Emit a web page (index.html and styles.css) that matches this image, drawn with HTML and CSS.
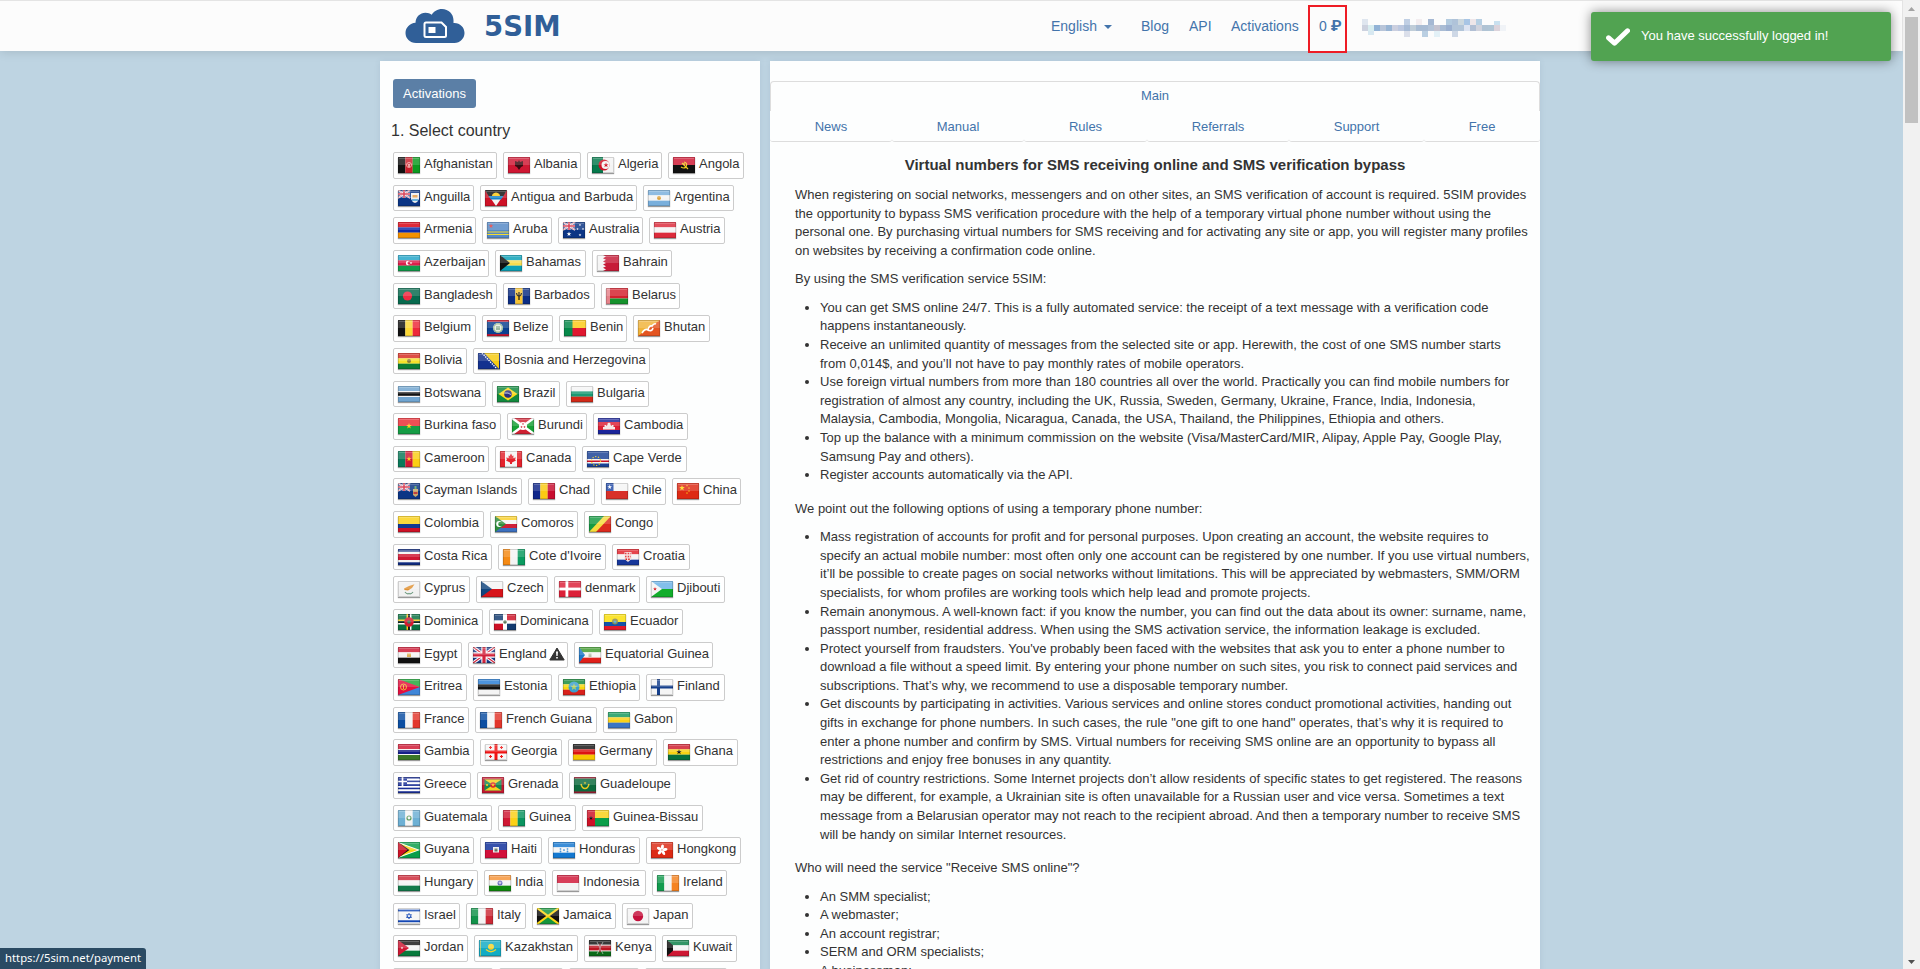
FILE: index.html
```html
<!DOCTYPE html>
<html lang="en">
<head>
<meta charset="utf-8">
<title>5SIM</title>
<link rel="stylesheet" href="styles.css">
</head>
<body>
<header class="topbar">
  <div class="brand">
    <svg class="brand-cloud" viewBox="0 0 60 35" width="60" height="35">
      <path fill="#305f98" d="M11 35C5 35 .5 30.500.5 25C.5 19.500 5 15.200 10.500 14.800C10.700 9 15 4.800 20.500 4.800C23 4.800 25.200 5.500 26.800 6.800C28.500 3.500 32.500 1 37 1C43.500 1 48.500 6 48.500 12.200L48.500 15C54.500 14.500 59.500 19 59.500 25C59.500 30.500 55 35 49.500 35Z"/>
      <path fill="none" stroke="#fff" stroke-width="2" d="M21 14.500H36.500L41 19V27.500Q41 29 39.500 29H21Q19.500 29 19.500 27.500V16Q19.500 14.500 21 14.500Z"/>
      <path fill="#fff" d="M23.500 19H30.500V25H23.500Z"/>
    </svg>
    <span class="brand-name">5SIM</span>
  </div>
  <nav class="menu">
    <a class="menu-lang">English <i class="caret"></i></a>
    <a class="menu-blog">Blog</a>
    <a class="menu-api">API</a>
    <a class="menu-act">Activations</a>
    <a class="menu-balance">0 <b>₽</b></a>
    <svg class="account" id="account" viewBox="0 0 24 3" width="144" height="18" preserveAspectRatio="none" shape-rendering="crispEdges"></svg>
  </nav>
</header>

<main class="page">
  <section class="panel countries">
    <button class="primary">Activations</button>
    <h2 class="step">1. Select country</h2>
    <div class="rows" id="rows"></div>
  </section>

  <section class="panel content">
    <nav class="tabs">
      <a class="tab-main">Main</a>
      <a>News</a><a>Manual</a><a>Rules</a><a>Referrals</a><a>Support</a><a>Free</a>
    </nav>
    <article class="article">
      <h1>Virtual numbers for SMS receiving online and SMS verification bypass</h1>
      <p>When registering on social networks, messengers and on other sites, an SMS verification of account is required. 5SIM provides the opportunity to bypass SMS verification procedure with the help of a temporary virtual phone number without using the personal one. By purchasing virtual numbers for SMS receiving and for activating any site or app, you will register many profiles on websites by receiving a confirmation code online.</p>
      <p>By using the SMS verification service 5SIM:</p>
      <ul>
        <li>You can get SMS online 24/7. This is a fully automated service: the receipt of a text message with a verification code happens instantaneously.</li>
        <li>Receive an unlimited quantity of messages from the selected site or app. Herewith, the cost of one SMS number starts<br>from 0,014$, and you’ll not have to pay monthly rates of mobile operators.</li>
        <li>Use foreign virtual numbers from more than 180 countries all over the world. Practically you can find mobile numbers for registration of almost any country, including the UK, Russia, Sweden, Germany, Ukraine, France, India, Indonesia, Malaysia, Cambodia, Mongolia, Nicaragua, Canada, the USA, Thailand, the Philippines, Ethiopia and others.</li>
        <li>Top up the balance with a minimum commission on the website (Visa/MasterCard/MIR, Alipay, Apple Pay, Google Play, Samsung Pay and others).</li>
        <li>Register accounts automatically via the API.</li>
      </ul>
      <p>We point out the following options of using a temporary phone number:</p>
      <ul>
        <li>Mass registration of accounts for profit and for personal purposes. Upon creating an account, the website requires to specify an actual mobile number: most often only one account can be registered by one number. If you use virtual numbers, it’ll be possible to create pages on social networks without limitations. This will be appreciated by webmasters, SMM/ORM specialists, for whom profiles are working tools which help lead and promote projects.</li>
        <li>Remain anonymous. A well-known fact: if you know the number, you can find out the data about its owner: surname, name, passport number, residential address. When using the SMS activation service, the information leakage is excluded.</li>
        <li>Protect yourself from fraudsters. You've probably been faced with the websites that ask you to enter a phone number to download a file without a speed limit. By entering your phone number on such sites, you risk to connect paid services and subscriptions. That’s why, we recommend to use a disposable temporary number.</li>
        <li>Get discounts by participating in activities. Various services and online stores conduct promotional activities, handing out gifts in exchange for phone numbers. In such cases, the rule "one gift to one hand" operates, that’s why it is required to enter a phone number and confirm by SMS. Virtual numbers for receiving SMS online are an opportunity to bypass all restrictions and enjoy free bonuses in any quantity.</li>
        <li>Get rid of country restrictions. Some Internet projects don’t allow residents of specific states to get registered. The reasons may be different, for example, a Ukrainian site is often unavailable for a Russian user and vice versa. Sometimes a text message from a Belarusian operator may not reach to the recipient abroad. And then a temporary number to receive SMS will be handy on similar Internet resources.</li>
      </ul>
      <p>Who will need the service "Receive SMS online"?</p>
      <ul>
        <li>An SMM specialist;</li>
        <li>A webmaster;</li>
        <li>An account registrar;</li>
        <li>SERM and ORM specialists;</li>
        <li>A businessman;</li>
      </ul>
    </article>
  </section>
</main>

<div class="highlight"></div>
<div class="toast">
  <svg viewBox="0 0 24 18" width="24" height="18"><path fill="none" stroke="#fff" stroke-width="5" stroke-linecap="round" stroke-linejoin="round" d="M2.600 9.800L8.500 15.200L21.500 2.800"/></svg>
  <span>You have successfully logged in!</span>
</div>
<div class="scrollbar">
  <svg viewBox="0 0 7 4" width="7" height="4"><path fill="#a3a3a3" d="M3.500 0L7 4H0Z"/></svg>
  <div class="thumb"></div>
  <svg class="down" viewBox="0 0 7 4" width="7" height="4"><path fill="#505050" d="M3.500 4L7 0H0Z"/></svg>
</div>
<div class="status">https://5sim.net/payment</div>
<script src="script.js"></script>
</body>
</html>
```
FILE: styles.css
```css
* { box-sizing: border-box; }
body {
  margin: 0;
  height: 969px;
  overflow: hidden;
  position: relative;
  background: #bed4e2;
  color: #333;
  font: 13px/18.571px "Liberation Sans", Arial, sans-serif;
}
a { color: #4374ab; text-decoration: none; }

.topbar {
  display: flex;
  height: 51px;
  width: 1903px;
  padding-left: 405px;
  background: #fcfcfc;
  border-top: 1px solid #e4e4e4;
  border-right: 1px solid #e4e4e4;
  box-shadow: 0 1px 10px rgba(0, 0, 0, .13);
}
.brand { display: flex; width: 646px; padding-top: 7px; }
.brand-name {
  margin: 2px 0 0 19px;
  color: #305f98;
  font: bold 27.5px/32px "DejaVu Sans", sans-serif;
}
.menu { display: flex; padding-top: 15px; font-size: 14px; line-height: 20px; }
.menu-lang { width: 90px; }
.menu-blog { width: 48px; }
.menu-api { width: 42px; }
.menu-act { width: 88px; }
.menu-balance { width: 43px; white-space: nowrap; }
.menu-balance b { font-family: Roboto, "Open Sans", sans-serif; font-size: 15.5px; line-height: 1; }
.caret {
  display: inline-block;
  margin-left: 3px;
  vertical-align: 2px;
  border: 4px solid transparent;
  border-top-color: #4374ab;
  border-bottom: 0;
}
.account { margin-top: 3px; }

.page { display: flex; gap: 10px; padding: 10px 0 0 380px; }
.panel { height: 920px; background: #fdfefe; box-shadow: 0 0 6px rgba(60, 90, 120, .1); }
.countries { width: 380px; padding: 18px 0 0 13px; }
.primary {
  display: block;
  width: 83px;
  height: 29px;
  padding: 0;
  border: 0;
  border-radius: 3px;
  background: #5b7fa6;
  color: #fff;
  font: 13px/29px "Liberation Sans", Arial, sans-serif;
}
.step { margin: 12px 0 11px -2px; font-size: 16px; line-height: 21px; font-weight: 400; }
.rows { display: flex; flex-direction: column; gap: 6.050px; padding-top: .150px; }
.row { display: flex; gap: 6px; height: 26.580px; }
.chip {
  display: flex;
  flex: none;
  height: 100%;
  padding: 2px 0 0 4px;
  border: 1px solid #ccc;
  border-radius: 2px;
  background: #fff;
  white-space: nowrap;
}
.flag { flex: none; width: 22px; height: 16px; margin: 2px 4px 0 0; box-shadow: 0 1px 1px rgba(0, 0, 0, .4); }
.warn { flex: none; width: 16px; height: 14px; margin: 2px 0 0 2px; }

.content { width: 770px; padding-top: 20px; }
.tabs { display: grid; grid-template-columns: 122px 132px 123px 142px 135px 116px; text-align: center; }
.tabs a { height: 31px; line-height: 32px; border-bottom: 1px solid #ddd; border-radius: 3px; }
.tabs .tab-main {
  grid-column: 1 / -1;
  height: 30px;
  line-height: 27px;
  border: 1px solid #ddd;
  border-bottom: 0;
  border-radius: 4px 4px 0 0;
}
.article { padding: 13px 9px 0 25px; }
.article h1 { margin: 0 16px 12px 0; font-size: 15px; line-height: 19px; text-align: center; }
.article p { margin: 0 0 10px; }
.article ul { margin: 0 0 15px; padding-left: 25px; }

.highlight { position: absolute; left: 1308px; top: 5px; width: 39px; height: 48px; border: 2px solid #ee1c25; }
.toast {
  position: absolute;
  left: 1591px;
  top: 12px;
  display: flex;
  align-items: center;
  gap: 11px;
  width: 300px;
  height: 49px;
  padding-left: 15px;
  border-radius: 3px;
  background: #51a351;
  box-shadow: 0 0 12px rgba(0, 0, 0, .45);
  color: #fff;
}
.scrollbar {
  position: absolute;
  top: 0;
  right: 0;
  display: flex;
  flex-direction: column;
  align-items: center;
  width: 17px;
  height: 969px;
  padding: 7px 0 5px;
  background: #f1f1f1;
}
.thumb { width: 13px; height: 106px; margin-top: 6px; background: #c1c1c1; }
.down { margin-top: auto; }
.status {
  position: absolute;
  left: 0;
  bottom: 0;
  width: 146px;
  height: 21px;
  padding-left: 5px;
  border-radius: 0 3px 0 0;
  background: #2a4a63;
  color: #fff;
  font: 11.3px/20px "Noto Sans", "Open Sans", sans-serif;
}
```
FILE: script.js
```js
// Flag drawing helpers; every flag is 22 by 16.
const R = (x, y, w, h, f) => `<rect x="${x}" y="${y}" width="${w}" height="${h}" fill="${f}"/>`;
const H = (...c) => c.map((f, i) => R(0, i * 16 / c.length, 22, 16 / c.length + .1, f)).join('');
const V = (...c) => c.map((f, i) => R(i * 22 / c.length, 0, 22 / c.length + .1, 16, f)).join('');
const C = (x, y, r, f) => `<circle cx="${x}" cy="${y}" r="${r}" fill="${f}"/>`;
const O = (x, y, r, s, w = 1) => `<circle cx="${x}" cy="${y}" r="${r}" fill="none" stroke="${s}" stroke-width="${w}"/>`;
const P = (d, f) => `<path d="${d}" fill="${f}"/>`;
const L = (d, s, w = 1) => `<path d="${d}" fill="none" stroke="${s}" stroke-width="${w}"/>`;
const S = (x, y, r, f) => {
  let d = '';
  for (let i = 0; i < 10; i++) {
    const a = -Math.PI / 2 + i * Math.PI / 5, q = i % 2 ? r * .4 : r;
    d += (i ? 'L' : 'M') + (x + q * Math.cos(a)).toFixed(2) + ' ' + (y + q * Math.sin(a)).toFixed(2);
  }
  return P(d + 'Z', f);
};
const moon = (x, y, r, f, bg, o = 1.2) => C(x, y, r, f) + C(x + o, y, r * .78, bg);
const jack = (w, h) => R(0, 0, w, h, '#1c3a86') +
  L(`M0 0L${w} ${h}M${w} 0L0 ${h}`, '#fff', h / 5) + L(`M0 0L${w} ${h}M${w} 0L0 ${h}`, '#d2233c', h / 14) +
  L(`M${w / 2} 0V${h}M0 ${h / 2}H${w}`, '#fff', h / 3) + L(`M${w / 2} 0V${h}M0 ${h / 2}H${w}`, '#d2233c', h / 5);
const ensign = R(0, 0, 22, 16, '#0b3585') + jack(12, 8);
const tri = (f, x = 10) => P(`M0 0L${x} 8L0 16Z`, f);
const red = '#ce1126', gold = '#fccb16', white = '#f4f4f4', black = '#111';

const flags = {
  'Afghanistan': V(black, '#c8202c', '#0c9a20') + O(11, 8, 2.500, '#eea0a0') + R(10, 7, 2, 3, '#e8a0a0'),
  'Albania': R(0, 0, 22, 16, '#cf1733') + P('M7 4L10 5L11 3L12 5L15 4V9L13 10L11 13L9 10L7 9Z', '#3a0a10'),
  'Algeria': V('#067a4c', white) + C(12, 8, 5.500, red) + C(13.500, 8, 4, white) + S(14, 8, 2.700, red),
  'Angola': H('#cf1733', black) + L('M11 5Q15 6 13 10Q11 12 8 10M9 6L15 12', '#f0cc20', 1.200) + S(11, 7, 1.600, '#f0cc20'),
  'Anguilla': ensign + P('M13 3H21V9Q20 12 17 13Q14 12 13 9Z', '#eee') + R(14.500, 5, 5, 2.500, '#e69a40') + R(14, 9, 6, 2, '#6ab4dd'),
  'Antigua and Barbuda': R(0, 0, 22, 16, red) + P('M0 0H22L11 16Z', white) + P('M0 0H22L18.500 6H3.500Z', black) + P('M3.500 6H18.500L16 9.500H6Z', '#1784c7') + P('M7 6Q7 3 11 2.500Q15 3 15 6Z', gold),
  'Argentina': H('#79afdc', white, '#79afdc') + C(11, 8, 2, '#dca340'),
  'Armenia': H('#d90012', '#0c2cab', '#f29100'),
  'Aruba': R(0, 0, 22, 16, '#5589c6') + R(0, 9.500, 22, 1, '#f2dc30') + R(0, 12, 22, 1, '#f2dc30') + S(4, 4, 2.500, '#e33b3b'),
  'Australia': ensign + S(6, 12, 2.500, '#fff') + S(17, 3, 1.300, '#fff') + S(20, 7, 1.200, '#fff') + S(14.500, 7, 1.200, '#fff') + S(17, 13, 1.500, '#fff'),
  'Austria': H('#dc2b3b', white, '#dc2b3b'),
  'Azerbaijan': H('#22a5c9', '#dc1f4b', '#109b4b') + moon(10, 8, 2.200, '#fff', '#dc1f4b') + S(13, 8, 1.400, '#fff'),
  'Bahamas': H('#0ba1b7', '#f6dc4f', '#0ba1b7') + tri(black),
  'Bahrain': R(0, 0, 22, 16, '#c71c38') + P('M0 0H6L9 1.600L6 3.200L9 4.800L6 6.400L9 8L6 9.600L9 11.200L6 12.800L9 14.400L6 16H0Z', white),
  'Bangladesh': R(0, 0, 22, 16, '#076a4e') + C(9.500, 8, 4.600, '#ef2b42'),
  'Barbados': V('#0b2d84', '#f7c332', '#0b2d84') + L('M8.500 5Q9 8 11 8Q13 8 13.500 5M11 4V12', black, 1.200),
  'Belarus': R(0, 0, 22, 10.500, '#d4202d') + R(0, 10.500, 22, 5.500, '#15922c') + R(0, 0, 4, 16, '#f2c6c8') + L('M1 0V16M3 0V16', '#d4202d', .8),
  'Belgium': V(black, '#fbd735', '#ed2939'),
  'Belize': R(0, 0, 22, 16, '#0b4190') + R(0, 0, 22, 1.800, red) + R(0, 14.200, 22, 1.800, red) + C(11, 8, 5, '#e8eee4') + O(11, 8, 4.200, '#6a9a55', .8) + R(9, 6, 4, 4, '#9ab9a0'),
  'Benin': R(0, 0, 22, 8, gold) + R(0, 8, 22, 8, '#e01830') + R(0, 0, 8.500, 16, '#06894a'),
  'Bhutan': R(0, 0, 22, 16, '#e45521') + P('M0 0H22L0 16Z', '#f1b43a') + L('M4 13Q7 8 10 10Q11 5 14 6Q16 3 18 4M10 10Q14 12 15 8', '#fff', 1.600),
  'Bolivia': H('#d62b20', '#f6e12a', '#0b7d34') + C(11, 8, 2, '#8b7a3a'),
  'Bosnia and Herzegovina': R(0, 0, 22, 16, '#13318f') + P('M6 0H21V16Z', '#f6cb12') + '<path d="M4 0L19 16" stroke="#fff" stroke-width="1.300" stroke-dasharray="1.400 1" fill="none"/>',
  'Botswana': R(0, 0, 22, 16, '#70a5d1') + R(0, 5, 22, 6, white) + R(0, 6.200, 22, 3.600, black),
  'Brazil': R(0, 0, 22, 16, '#128a3e') + P('M11 1.500L20.500 8L11 14.500L1.500 8Z', '#fbd91c') + C(11, 8, 3.800, '#2c2f7e') + L('M7.500 7Q11 6 14.500 9', '#c8d4e8', .8),
  'Bulgaria': H(white, '#1a9a73', '#d22a18'),
  'Burkina faso': H('#ea2b33', '#159c45') + S(11, 8, 3, gold),
  'Burundi': R(0, 0, 22, 16, '#17a135') + P('M0 0H22L0 16H22Z', '#cf2032') + L('M0 0L22 16M22 0L0 16', '#fff', 2.500) + C(11, 8, 4, '#fff') + S(11, 6, 1.200, red) + S(9.500, 9, 1.200, red) + S(12.500, 9, 1.200, red),
  'Cambodia': R(0, 0, 22, 16, '#1a249a') + R(0, 4, 22, 8, '#dc1f35') + P('M5 11.500V9H6.500V7H8V8L9.500 7V5.500L11 4.500L12.500 5.500V7L14 8V7H15.500V9H17V11.500Z', '#f4e8e8'),
  'Cameroon': V('#0a7a5a', '#cf1733', '#fbcf15') + S(11, 8, 2.700, gold),
  'Canada': R(0, 0, 22, 16, '#f4f4f4') + R(0, 0, 5, 16, '#e4222c') + R(17, 0, 5, 16, '#e4222c') + P('M11 2.500L12.300 5L13.500 4.500L13.300 7L16 6.500L15 8.500L16 9.500L12 11.500V13H10V11.500L6 9.500L7 8.500L6 6.500L8.700 7L8.500 4.500L9.700 5Z', '#e4222c'),
  'Cape Verde': R(0, 0, 22, 16, '#1a4296') + R(0, 8, 22, 4.500, white) + R(0, 9.500, 22, 1.500, red) + '<circle cx="9" cy="10" r="4.500" fill="none" stroke="#f7d116" stroke-width="1.200" stroke-dasharray="1.200 1.630"/>',
  'Cayman Islands': ensign + P('M15 6H20V12L17.500 14L15 12Z', '#c8a86c') + R(16.500, 3, 2, 3, '#58a05c') + R(15.500, 9, 4, 2, '#c04040'),
  'Chad': V('#10268a', '#fbcb12', '#c80d2f'),
  'Chile': H(white, '#d8312a') + R(0, 0, 7.500, 8, '#1f48a5') + S(3.700, 4, 2.500, '#fff'),
  'China': R(0, 0, 22, 16, '#de2a14') + S(5, 5, 3, '#ffd916') + S(10, 2.500, 1.100, '#ffd916') + S(12, 5, 1.100, '#ffd916') + S(12, 8, 1.100, '#ffd916') + S(10, 10, 1.100, '#ffd916'),
  'Colombia': R(0, 0, 22, 8, '#fbd116') + R(0, 8, 22, 4, '#123a93') + R(0, 12, 22, 4, '#ce1126'),
  'Comoros': H('#fbd02a', white, '#cf2038', '#3c70bf') + tri('#2f8d3b', 11) + moon(4.200, 8, 3, '#fff', '#2f8d3b', 1.300),
  'Congo': R(0, 0, 22, 16, '#f6dc3d') + P('M0 0H15L0 16Z', '#159a43') + P('M22 0V16H7Z', '#dc2a1e'),
  'Costa Rica': R(0, 0, 22, 16, '#0f2b7f') + R(0, 2.700, 22, 10.600, white) + R(0, 5, 22, 6, '#cf1733'),
  "Cote d'Ivoire": V('#f58a14', white, '#0a9b60'),
  'Croatia': H('#e0202a', white, '#17379a') + P('M7.500 3H14.500V10L11 13L7.500 10Z', '#f2dcdc') + '<path d="M8 4.500H14M8 7.500H14M8.500 10.300H13.500" stroke="#d22" stroke-width="1.500" stroke-dasharray="1.500 1.200" fill="none"/>',
  'Cyprus': R(0, 0, 22, 16, '#f1f1f1') + P('M6 7.500L11 5L16.500 3.200L14 7L10 9.500L6.500 9Z', '#e09132') + L('M7 11Q9 13.500 11 12.500Q13 13.500 15 11', '#6d9a7f', 1.200),
  'Czech': H(white, '#d7141a') + tri('#11457e', 11),
  'denmark': R(0, 0, 22, 16, '#dc2038') + R(6.500, 0, 2.800, 16, '#fff') + R(0, 6.600, 22, 2.800, '#fff'),
  'Djibouti': H('#6ab2e7', '#12ad2b') + tri('#f4f4f4', 11) + S(4, 8, 2, '#d7141a'),
  'Dominica': R(0, 0, 22, 16, '#087040') + L('M0 6.300H22M9.300 0V16', '#fcd116', 1.500) + L('M0 8H22M11 0V16', '#111', 1.700) + L('M0 9.700H22M12.700 0V16', '#fff', 1.500) + C(11, 8, 4.800, '#d41c30') + C(11, 8, 1.800, '#3f7b62'),
  'Dominicana': R(0, 0, 22, 16, '#fff') + R(0, 0, 9, 6.300, '#123a70') + R(13, 0, 9, 6.300, '#ce1126') + R(0, 9.700, 9, 6.300, '#ce1126') + R(13, 9.700, 9, 6.300, '#123a70') + C(11, 8, 1.800, '#60765a'),
  'Ecuador': R(0, 0, 22, 8, '#fbdf08') + R(0, 8, 22, 4, '#1452a8') + R(0, 12, 22, 4, '#e2182a') + C(11, 7.500, 3, '#8d8a48') + C(11, 8, 1.500, '#5aa8c9'),
  'Egypt': H('#ce1733', white, black) + R(9, 6.500, 4, 3.500, '#dcb45c'),
  'England': jack(22, 16),
  'Equatorial Guinea': H('#3e9a2c', white, '#e0201a') + tri('#1d78c9', 6) + R(9.500, 6.500, 3, 3.500, '#b8c0ac'),
  'Eritrea': H('#20a83a', '#3f86d8') + P('M0 0L22 8L0 16Z', '#e4103f') + O(5.500, 8, 3, '#f0b43c') + R(5, 6, 1, 4, '#f0b43c'),
  'Estonia': H('#2a7fd6', black, white),
  'Ethiopia': H('#158a3c', '#f8d80f', '#d9211c') + C(11, 8, 5.500, '#3a9fd0') + S(11, 8, 3.800, '#b8d060'),
  'Finland': R(0, 0, 22, 16, '#f5f5f5') + R(6, 0, 3, 16, '#153f8c') + R(0, 6.500, 22, 3, '#153f8c'),
  'France': V('#0b4ea2', white, '#e2362b'),
  'French Guiana': V('#0b4ea2', white, '#e2362b'),
  'Gabon': H('#14995c', '#fbd116', '#3b75c4'),
  'Gambia': R(0, 0, 22, 16, white) + R(0, 0, 22, 5, '#cf1733') + R(0, 6, 22, 4, '#15208a') + R(0, 11, 22, 5, '#3a7728'),
  'Georgia': R(0, 0, 22, 16, '#f6f6f6') + L('M11 0V16M0 8H22', '#f01414', 3) + L('M4 3.500H7M5.500 2V5M15 3.500H18M16.500 2V5M4 12.500H7M5.500 11V14M15 12.500H18M16.500 11V14', '#f01414', 1.100),
  'Germany': H('#181818', '#dd1212', '#f7c600'),
  'Ghana': H('#ce1b2c', '#f9d314', '#08703c') + S(11, 8, 2.800, black),
  'Greece': H('#1a2f96', '#fff', '#1a2f96', '#fff', '#1a2f96', '#fff', '#1a2f96', '#fff', '#1a2f96') + R(0, 0, 9, 8.900, '#1a2f96') + L('M4.500 0V9M0 4.500H9', '#fff', 1.700),
  'Grenada': R(0, 0, 22, 16, '#c51830') + R(2.500, 2.500, 17, 11, '#178a50') + P('M2.500 2.500H19.500L2.500 13.500H19.500Z', '#f8d020') + C(11, 8, 2.800, '#d82030') + S(11, 8, 2, gold) + C(5, 8, 1.100, gold),
  'Guadeloupe': R(0, 0, 22, 16, '#0d6b3e') + R(0, 0, 22, 1.500, '#a31f34') + R(0, 14.500, 22, 1.500, '#a31f34') + L('M7 7Q8 11.500 11 11.500Q14 11.500 15 7', '#e8c820', 1.400) + S(11, 6, 1.500, '#e8c820'),
  'Guatemala': V('#6db0d4', white, '#6db0d4') + O(11, 8, 2, '#5c9a5c', 1.200),
  'Guinea': V('#cf1733', '#fbd116', '#0a9460'),
  'Guinea-Bissau': R(0, 0, 22, 8, '#fbd116') + R(0, 8, 22, 8, '#0a9e49') + R(0, 0, 8, 16, '#ce1126') + S(4, 8, 2.200, black),
  'Guyana': R(0, 0, 22, 16, '#0a9e49') + P('M0 0L22 8L0 16Z', '#fff') + P('M0 1L19.500 8L0 15Z', '#fcd116') + tri('#111', 11.500) + tri('#ce1126', 9.500),
  'Haiti': H('#0f2f9c', '#d2103a') + R(8, 5, 6, 5.500, '#eee') + R(9.500, 6.500, 3, 3, '#5c7060'),
  'Honduras': H('#1478d0', white, '#1478d0') + C(7.500, 7, .9, '#4a96d8') + C(7.500, 9.500, .9, '#4a96d8') + C(11, 8, .9, '#4a96d8') + C(14.500, 7, .9, '#4a96d8') + C(14.500, 9.500, .9, '#4a96d8'),
  'Hongkong': R(0, 0, 22, 16, '#dc2a14') + [0, 72, 144, 216, 288].map(a => `<ellipse cx="11" cy="5" rx="1.500" ry="2.600" fill="#fff" transform="rotate(${a + 8} 11 8)"/>`).join(''),
  'Hungary': H('#ce2939', white, '#127a4a'),
  'India': H('#f79438', white, '#108a0c') + O(11, 8, 1.900, '#6a6ac0', 1.200) + C(11, 8, .7, '#6a6ac0'),
  'Indonesia': H('#d01738', white),
  'Ireland': V('#129b4e', white, '#f58220'),
  'Israel': R(0, 0, 22, 16, '#f6f6f6') + R(0, 1.500, 22, 1.900, '#1347b5') + R(0, 12.300, 22, 1.900, '#1347b5') + L('M11 5.200L13.500 9.500H8.500ZM11 10.900L13.500 6.600H8.500Z', '#1347b5', .8),
  'Italy': V('#12924a', white, '#cc2936'),
  'Jamaica': R(0, 0, 22, 16, '#14943c') + P('M0 0L11 8L0 16ZM22 0L11 8L22 16Z', black) + L('M0 0L22 16M22 0L0 16', '#fcd616', 2.200),
  'Japan': R(0, 0, 22, 16, '#f4f4f4') + C(11, 8, 5.200, '#c5113c'),
  'Jordan': H('#181818', white, '#087a3c') + tri('#ce1733', 11) + S(4, 8, 1.400, '#fff'),
  'Kazakhstan': R(0, 0, 22, 16, '#12abc4') + C(12, 6.800, 3, '#f2d42c') + L('M7 9.500Q12 14 17 9.500', '#f2d42c', 1.200) + L('M1.500 0V16', '#c8cc5c', .8),
  'Kenya': R(0, 0, 22, 16, white) + R(0, 0, 22, 4.600, black) + R(0, 5.600, 22, 4.800, '#bd1522') + R(0, 11.400, 22, 4.600, '#0a6a18') + L('M8 2L14 14M14 2L8 14', '#ddd', .6) + P('M11 3Q13.500 8 11 13Q8.500 8 11 3Z', '#9a1520') + R(10.600, 5, .8, 6, '#eee'),
  'Kuwait': H('#0a8048', white, '#ce1733') + P('M0 0L6 5.300V10.700L0 16Z', black),
  'Kyrgyzstan': R(0, 0, 22, 16, '#e0202c') + C(11, 8, 4, gold),
  'Laos': H('#ce1126', '#10307f', '#ce1126'),
  'Latvia': H('#9e3039', white, '#9e3039'),
  'Lithuania': H('#fdb913', '#006a44', '#c1272d')
};

// Each row lists country name and chip width.
const rows = [
  ['Afghanistan', 104, 'Albania', 78, 'Algeria', 75, 'Angola', 76],
  ['Anguilla', 81, 'Antigua and Barbuda', 157, 'Argentina', 91],
  ['Armenia', 83, 'Aruba', 70, 'Australia', 85, 'Austria', 76],
  ['Azerbaijan', 96, 'Bahamas', 91, 'Bahrain', 80],
  ['Bangladesh', 104, 'Barbados', 92, 'Belarus', 79],
  ['Belgium', 83, 'Belize', 71, 'Benin', 68, 'Bhutan', 77],
  ['Bolivia', 74, 'Bosnia and Herzegovina', 177],
  ['Botswana', 93, 'Brazil', 68, 'Bulgaria', 83],
  ['Burkina faso', 108, 'Burundi', 80, 'Cambodia', 95],
  ['Cameroon', 96, 'Canada', 81, 'Cape Verde', 105],
  ['Cayman Islands', 129, 'Chad', 67, 'Chile', 65, 'China', 69],
  ['Colombia', 91, 'Comoros', 88, 'Congo', 74],
  ['Costa Rica', 99, "Cote d'Ivoire", 108, 'Croatia', 78],
  ['Cyprus', 77, 'Czech', 72, 'denmark', 86, 'Djibouti', 79],
  ['Dominica', 90, 'Dominicana', 104, 'Ecuador', 84],
  ['Egypt', 69, 'England', 100, 'Equatorial Guinea', 139],
  ['Eritrea', 74, 'Estonia', 79, 'Ethiopia', 82, 'Finland', 79],
  ['France', 76, 'French Guiana', 122, 'Gabon', 74],
  ['Gambia', 81, 'Georgia', 82, 'Germany', 89, 'Ghana', 75],
  ['Greece', 78, 'Grenada', 86, 'Guadeloupe', 107],
  ['Guatemala', 99, 'Guinea', 78, 'Guinea-Bissau', 121],
  ['Guyana', 81, 'Haiti', 62, 'Honduras', 92, 'Hongkong', 95],
  ['Hungary', 85, 'India', 62, 'Indonesia', 94, 'Ireland', 75],
  ['Israel', 67, 'Italy', 60, 'Jamaica', 84, 'Japan', 71],
  ['Jordan', 75, 'Kazakhstan', 104, 'Kenya', 72, 'Kuwait', 75],
  ['Kyrgyzstan', 100, 'Laos', 64, 'Latvia', 70, 'Lithuania', 82]
];

const gloss = '<rect width="22" height="8" fill="#fff" opacity=".17"/><rect x=".5" y=".5" width="21" height="15" fill="none" stroke="#000" stroke-opacity=".15"/><rect x="1" y="1" width="20" height="1" fill="#fff" opacity=".2"/>';
const warn = '<svg class="warn" viewBox="0 0 16 14"><path d="M8 1L15.200 13H.8Z" fill="#333" stroke="#333" stroke-width="1" stroke-linejoin="round"/><path d="M7 4.500H9L8.600 9H7.400ZM7.200 10H8.800V11.500H7.200Z" fill="#fff"/></svg>';

const chip = (name, width) =>
  `<div class="chip" style="width:${width}px"><svg class="flag" viewBox="0 0 22 16">${flags[name]}${gloss}</svg><span>${name}</span>${name === 'England' ? warn : ''}</div>`;

document.getElementById('rows').innerHTML = rows.map(row => {
  let html = '';
  for (let i = 0; i < row.length; i += 2) html += chip(row[i], row[i + 1]);
  return `<div class="row">${html}</div>`;
}).join('');

// Obscured account name: one entry per 6px cell, as column, row, colour.
const cells = [
  [0, 0, '#dfe6ef'], [7, 0, '#c0cfe4'], [9, 0, '#f3edef'], [11, 0, '#a5b8d3'], [14, 0, '#b3cbdf'], [15, 0, '#afc3d9'],
  [16, 0, '#ccd8df'], [17, 0, '#a8c5e5'], [18, 0, '#eee6e9'], [19, 0, '#b6cfe3'], [22, .4, '#c9e0ef'],
  [7, 2, '#dbdfea'], [10, 2, '#bacfe2'], [12, 2, '#e3f1f7'], [15, 2, '#ced8e6'], [1, 1.600, '#d7e8f1']
];
'#cdd2df #d8edf0 #92b3d6 #b8c5d9 #99b5d4 #cbcfdf #bcc8e0 #a7bbd6 #c0cdd8 #a9bcd3 #a9bcd4 #b3c3d8 #c4c3d0 #a9bcd4 #9bb0d0 #b2c5d9 #b2c5d9 #dde4f2 #b1bfd4 #d1d3dd #b0c3d4 #b0c5d5 #dcd3db #f0f3f7'
  .split(' ').forEach((c, i) => cells.push([i, 1, c]));
document.getElementById('account').innerHTML = cells.map(([x, y, c]) => R(x, y, 1, 1, c)).join('');
```
